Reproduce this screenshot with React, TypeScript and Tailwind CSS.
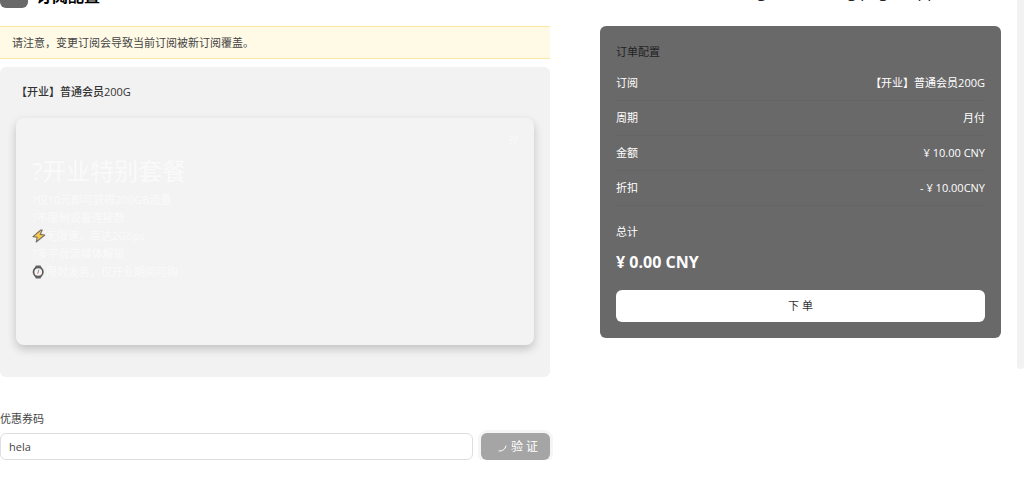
import { useState } from 'react';

const orderRows = [
  { label: '订阅', value: '【开业】普通会员200G' },
  { label: '周期', value: '月付' },
  { label: '金额', value: '¥ 10.00 CNY' },
  { label: '折扣', value: '- ¥ 10.00CNY' },
];

function BoltIcon() {
  return (
    <svg className="h-3.5 w-3.5 shrink-0" viewBox="0 0 14 14" aria-hidden="true">
      <path d="M8.8 1 1 7.6 5.2 8.2 4.2 13 12.8 6 8.2 5.4 10.2 1Z" fill="#fbc94a" stroke="#77716a" strokeWidth="1.1" strokeLinejoin="round" />
    </svg>
  );
}

function WatchIcon() {
  return (
    <svg className="h-3.5 w-3.5 shrink-0" viewBox="0 0 14 14" aria-hidden="true">
      <path d="M3.8.4h4.8l1.2 2.8v7.6l-1.2 2.8H3.8l-1.2-2.8V3.2Z" fill="#666" />
      <circle cx="6.2" cy="7" r="4.7" fill="#f4f4f4" stroke="#5c5c5c" strokeWidth="1.7" />
      <path d="M6.8 4.6 6.2 7.2" stroke="#777" strokeWidth=".8" />
      <path d="M6.2 7.2 5.6 8.6" stroke="#e05a4e" strokeWidth="1" />
    </svg>
  );
}

function PlanCard() {
  return (
    <section className="rounded-md bg-[#f2f2f2] px-4 pt-[15px] pb-8">
      <h2 className="font-medium leading-5 text-[#333]">【开业】普通会员200G</h2>
      <div className="mt-4 h-[227px] rounded-lg bg-[#f3f3f3] px-4 pt-[14px] text-[#fafafa] shadow-[0_4px_10px_rgba(0,0,0,0.2)]">
        <p className="text-right leading-4">??</p>
        <h3 className="mt-[7px] text-2xl leading-8">?开业特别套餐</h3>
        <ul className="mt-1 leading-[18px]">
          <li>?仅10元即可获得200GB流量</li>
          <li>?不限制设备连接数</li>
          <li className="flex items-center"><BoltIcon />无限速，高达2Gbps</li>
          <li>?多平台流媒体解锁</li>
          <li className="flex items-center"><WatchIcon />限时发售，仅开业期间可购</li>
        </ul>
      </div>
    </section>
  );
}

function CouponForm() {
  const [code, setCode] = useState('hela');

  return (
    <form className="mt-8" onSubmit={(e) => e.preventDefault()}>
      <label htmlFor="coupon" className="block leading-5 text-[#444]">优惠券码</label>
      <div className="mt-1 flex gap-2">
        <input
          id="coupon"
          value={code}
          onChange={(e) => setCode(e.target.value)}
          className="h-[27px] min-w-0 flex-1 rounded-md border border-[#dedede] bg-white px-2 text-[#444] outline-none"
        />
        <button type="submit" className="flex h-[27px] w-[69px] items-center justify-center gap-1 rounded-md bg-[#a5a5a5] pl-1 text-xs text-white ring-3 ring-[#f5f5f5]">
          <svg className="h-2.5 w-2.5" viewBox="0 0 10 10" fill="none" aria-hidden="true">
            <path d="M9 4A6 6 0 0 1 2 9" stroke="#fff" strokeWidth="1" strokeLinecap="round" />
          </svg>
          验 证
        </button>
      </div>
    </form>
  );
}

function OrderSummary() {
  return (
    <section className="rounded-md bg-[#696969] p-4 text-white">
      <h2 className="leading-5 text-[#222]">订单配置</h2>
      <dl className="mt-1">
        {orderRows.map((row) => (
          <div key={row.label} className="flex h-[35px] items-center justify-between border-b border-[#646464] pt-px">
            <dt>{row.label}</dt>
            <dd>{row.value}</dd>
          </div>
        ))}
      </dl>
      <p className="mt-4 leading-5">总计</p>
      <p className="mt-2 text-base font-bold leading-6">¥ 0.00 CNY</p>
      <button type="button" className="mt-4 h-8 w-full rounded-md bg-white text-[#333]">下 单</button>
    </section>
  );
}

export default function App() {
  return (
    <div className="flex items-start overflow-hidden bg-white font-['Open_Sans','Noto_Sans_CJK_SC',sans-serif] text-[11px]">
      <div className="min-w-0 flex-1 pr-4">
        {/* header is scrolled partly out of view */}
        <header className="-mt-5 flex h-[46px] items-start justify-between pr-16">
          <div className="flex gap-2">
            <span className="h-7 w-7 rounded-md bg-[#696969]" />
            <h1 className="text-base font-bold leading-8 text-black">订阅配置</h1>
          </div>
          <span className="text-base leading-[22px] text-[#222]">gmail.routing pages.app</span>
        </header>
        <main className="flex items-start gap-[50px]">
          <div className="min-w-0 flex-[550]">
            <p role="alert" className="mb-2 border-y border-[#fbe7a2] bg-[#fffae6] px-3 py-1.5 leading-[19px] text-[#444]">
              请注意，变更订阅会导致当前订阅被新订阅覆盖。
            </p>
            <PlanCard />
            <CouponForm />
          </div>
          <div className="min-w-0 flex-[401]">
            <OrderSummary />
          </div>
        </main>
      </div>
      <div className="h-[369px] w-[7px] shrink-0 rounded-b bg-[#f2f2f2]" />
    </div>
  );
}
